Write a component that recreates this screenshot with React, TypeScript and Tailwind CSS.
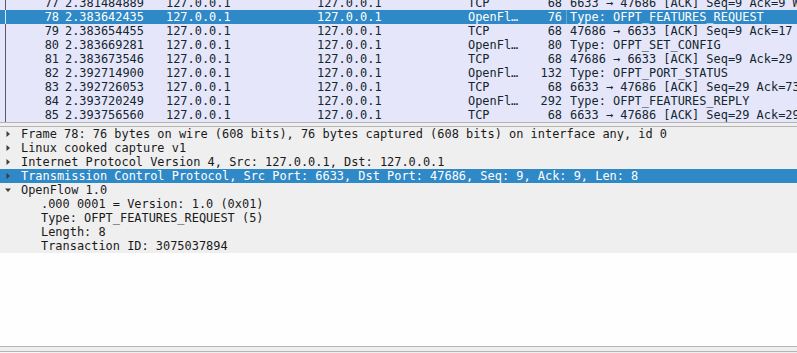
import React from 'react';

type Pkt = {
  no: number;
  time: string;
  proto: string;
  len: number;
  info: string;
};

const packets: Pkt[] = [
  { no: 77, time: '2.381484889', proto: 'TCP', len: 68, info: '6633 → 47686 [ACK] Seq=9 Ack=9 Win=43776 Len=0' },
  { no: 78, time: '2.383642435', proto: 'OpenFl…', len: 76, info: 'Type: OFPT_FEATURES_REQUEST' },
  { no: 79, time: '2.383654455', proto: 'TCP', len: 68, info: '47686 → 6633 [ACK] Seq=9 Ack=17 Win=43776 Len=0' },
  { no: 80, time: '2.383669281', proto: 'OpenFl…', len: 80, info: 'Type: OFPT_SET_CONFIG' },
  { no: 81, time: '2.383673546', proto: 'TCP', len: 68, info: '47686 → 6633 [ACK] Seq=9 Ack=29 Win=43776 Len=0' },
  { no: 82, time: '2.392714900', proto: 'OpenFl…', len: 132, info: 'Type: OFPT_PORT_STATUS' },
  { no: 83, time: '2.392726053', proto: 'TCP', len: 68, info: '6633 → 47686 [ACK] Seq=29 Ack=73 Win=43776 Len=0' },
  { no: 84, time: '2.393720249', proto: 'OpenFl…', len: 292, info: 'Type: OFPT_FEATURES_REPLY' },
  { no: 85, time: '2.393756560', proto: 'TCP', len: 68, info: '6633 → 47686 [ACK] Seq=29 Ack=297 Win=43776 Len=0' },
];

const SELECTED = 78;

function PacketRow({ p }: { p: Pkt }) {
  const sel = p.no === SELECTED;
  return (
    <div
      className={
        'flex h-[14px] items-center whitespace-nowrap leading-[14px] ' +
        (sel ? 'bg-[#2f89c6] text-white' : 'bg-[#e6e6fa] text-[#12272e]')
      }
    >
      <div className="w-[5px] shrink-0" />
      <div className={'w-px self-stretch shrink-0 ' + (sel ? 'bg-[#d8e8f4]' : 'bg-[#5a5a6a]')} />
      <div className="w-[56px] shrink-0 pr-[3px] text-right">{p.no}</div>
      <div className="w-[101px] shrink-0 pl-[3px]">{p.time}</div>
      <div className="w-[151px] shrink-0 pl-[3px]">127.0.0.1</div>
      <div className="w-[151px] shrink-0 pl-[3px]">127.0.0.1</div>
      <div className="w-[61px] shrink-0 pl-[3px] overflow-hidden">{p.proto}</div>
      <div className="w-[40px] shrink-0 pr-[4px] text-right">{p.len}</div>
      <div
        className={
          'flex-1 self-stretch overflow-hidden pl-[3px] ' +
          (sel ? 'border-l border-[#6aa9d6]' : 'border-l border-transparent')
        }
      >
        {p.info}
      </div>
    </div>
  );
}

function Arrow({ open }: { open?: boolean }) {
  return (
    <svg width="8" height="8" viewBox="0 0 8 8" className="shrink-0">
      {open ? (
        <path d="M1 2.5 L7 2.5 L4 6 Z" fill="#3c3c3c" />
      ) : (
        <path d="M2.5 1 L6 4 L2.5 7 Z" fill="#3c3c3c" />
      )}
    </svg>
  );
}

type Node = { text: string; level: number; arrow?: 'open' | 'closed'; sel?: boolean };

const tree: Node[] = [
  { text: 'Frame 78: 76 bytes on wire (608 bits), 76 bytes captured (608 bits) on interface any, id 0', level: 0, arrow: 'closed' },
  { text: 'Linux cooked capture v1', level: 0, arrow: 'closed' },
  { text: 'Internet Protocol Version 4, Src: 127.0.0.1, Dst: 127.0.0.1', level: 0, arrow: 'closed' },
  { text: 'Transmission Control Protocol, Src Port: 6633, Dst Port: 47686, Seq: 9, Ack: 9, Len: 8', level: 0, arrow: 'closed', sel: true },
  { text: 'OpenFlow 1.0', level: 0, arrow: 'open' },
  { text: '.000 0001 = Version: 1.0 (0x01)', level: 1 },
  { text: 'Type: OFPT_FEATURES_REQUEST (5)', level: 1 },
  { text: 'Length: 8', level: 1 },
  { text: 'Transaction ID: 3075037894', level: 1 },
];

function TreeRow({ n }: { n: Node }) {
  return (
    <div
      className={
        'flex h-[14px] items-center whitespace-nowrap leading-[14px] ' +
        (n.sel ? 'bg-[#2f89c6] text-white' : 'bg-[#efefef] text-[#1a1a1a]')
      }
    >
      <div className="flex w-[21px] shrink-0 items-center pl-[4px]">
        {n.arrow && <Arrow open={n.arrow === 'open'} />}
      </div>
      {n.level === 1 && <div className="w-[20px] shrink-0" />}
      <span>{n.text}</span>
    </div>
  );
}

export default function App() {
  return (
    <div
      className="flex h-[353px] w-[797px] flex-col overflow-hidden bg-white text-[11.93px]"
      style={{ fontFamily: '"DejaVu Sans Mono", monospace' }}
    >
      {/* packet list */}
      <div className="h-[122px] shrink-0 overflow-hidden bg-[#e6e6fa]">
        <div className="-mt-[4px]">
          {packets.map((p) => (
            <PacketRow key={p.no} p={p} />
          ))}
        </div>
      </div>
      <div className="h-px shrink-0 bg-[#b4b4b4]" />
      <div className="h-[3px] shrink-0 bg-[#efefef]" />
      <div className="h-px shrink-0 bg-[#b4b4b4]" />

      {/* packet details */}
      <div className="h-[219px] shrink-0 overflow-hidden bg-[#fefefe]">
        {tree.map((n, i) => (
          <TreeRow key={i} n={n} />
        ))}
      </div>
      <div className="h-px shrink-0 bg-[#b4b4b4]" />
      <div className="h-[4px] shrink-0 bg-[#efefef]" />
      <div className="h-px shrink-0 bg-[#b4b4b4]" />
      <div className="flex h-[2px] shrink-0 bg-[#efefef]">
        <div className="w-[40px] bg-[#f8f8f8]" />
      </div>
    </div>
  );
}
